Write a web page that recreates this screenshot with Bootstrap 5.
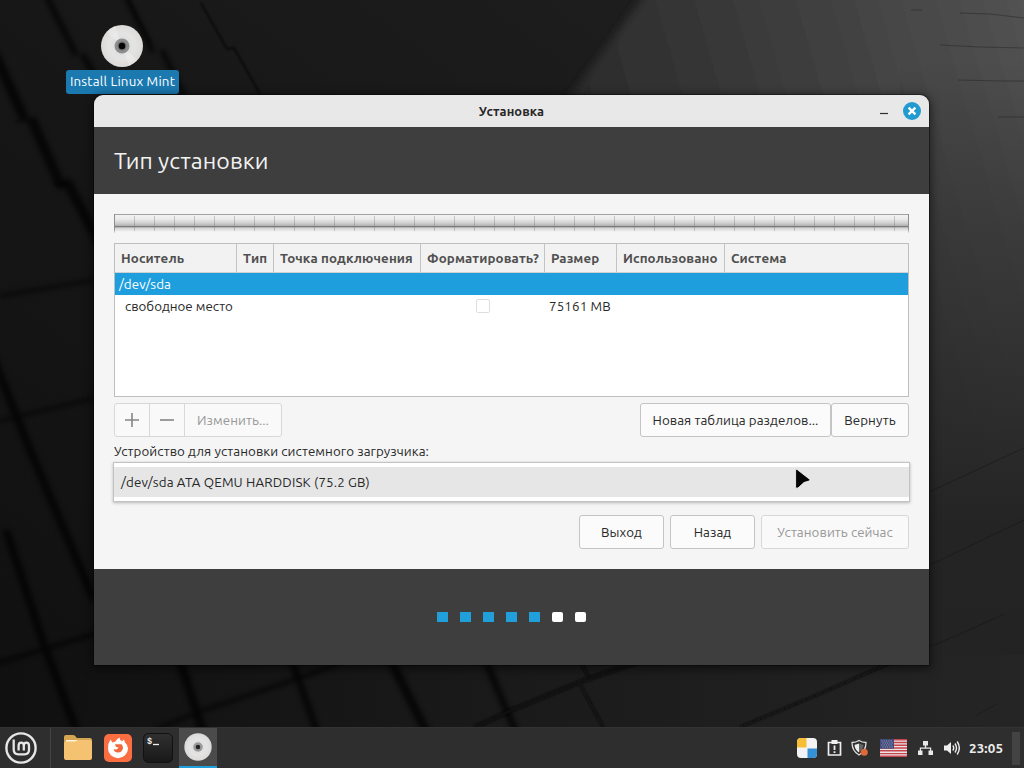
<!DOCTYPE html>
<html lang="ru">
<head>
  <meta charset="utf-8">
  <title>Установка</title>
  <link rel="stylesheet" href="https://cdn.jsdelivr.net/npm/bootstrap@5.3.0/dist/css/bootstrap.min.css">
  <style>
    body {
      width: 1024px;
      height: 768px;
      background: #151515;
      font-family: Ubuntu, "Noto Sans", "Open Sans", sans-serif;
      font-size: 13.33px;
      line-height: 20px;
      letter-spacing: .06px;
      color: #282828;
      cursor: default;
    }
    .latin { letter-spacing: .15px; }
    .wallpaper { left: 0; top: 0; }
    .desk-icon { left: 66px; top: 24px; width: 113px; }
    .desk-icon svg { margin-left: 34px; }
    .desk-label { background: #1b79b0; color: #fff; border-radius: 3px; height: 24px; line-height: 23px; margin-top: 2px; letter-spacing: .2px; white-space: nowrap; }

    /* installer window */
    .win { left: 94px; top: 95px; width: 835px; height: 570px; border-radius: 9px 9px 0 0; box-shadow: 0 2px 10px 2px rgba(0,0,0,.5), 0 0 0 1px rgba(0,0,0,.35); }
    .win-title { height: 32px; background: #e8e8e8; border-radius: 9px 9px 0 0; }
    .win-title b { font-size: 12.9px; }
    .win-buttons { right: 8px; top: 7px; gap: 14px; }
    .win-head { height: 67px; background: #3e3e3e; color: #f2f2f2; font-size: 23.15px; padding-bottom: 1px; }
    .win-body { height: 375px; background: #f5f5f5; padding: 20px 20px 0; }
    .win-foot { height: 96px; background: #3e3e3e; gap: 12px; }
    .win-foot i { width: 11px; height: 10px; background: #209fdb; }
    .win-foot i.todo { background: #fff; border-radius: 2px; }

    .disk-bar {
      height: 19px;
      border-left: 1px solid #8e8e8e;
      border-right: 1px solid #8e8e8e;
      border-image: linear-gradient(#8e8e8e 75%, transparent) 1;
      background:
        repeating-linear-gradient(90deg, transparent 0 19px, rgba(120,120,120,.36) 19px 20px) 0 2px / 100% 15px no-repeat,
        linear-gradient(#a2a2a2 0 1px, #f2f2f2 1px, #ebebeb 5px, #d0d0d0 9px, #b0b0b0 12px, #7c7c7c 12px 13px, #9a9a9a 13px, #d4d4d4 14px, #f5f5f5 18px);
    }

    .parts { height: 154px; margin-top: 10px; background: #fff; border: 1px solid #bebebe; }
    .parts table { table-layout: fixed; width: 793px; border-collapse: separate; border-spacing: 0; }
    .parts th { height: 29px; padding: 2px 0 0 6px; background: #f2f2f2; color: #505050; border-right: 1px solid #c3c3c3; border-bottom: 1px solid #d0d0d0; letter-spacing: .1px; white-space: nowrap; }
    .parts th:last-child { border-right: 0; }
    .parts td { height: 22px; padding: 2px 0 0 4px; line-height: 20px; white-space: nowrap; }
    .parts .picked td { background: #1f9ede; color: #fff; }
    .parts .child { padding-left: 10px; letter-spacing: 0; }
    .parts .check { padding-top: 0; }
    .tick { display: block; width: 14px; height: 14px; border: 1px solid #dedede; border-radius: 2px; background: #fff; margin-left: 51px; }
    .tools { margin-top: 6px; }
    .actions { margin-top: 13px; gap: 6px; }

    .gbtn { height: 34px; border: 1px solid #c4c4c4; border-radius: 3px; background: #fbfbfb; color: #282828; padding: 2px 0 0; line-height: 20px; letter-spacing: inherit; white-space: nowrap; }
    .gbtn:disabled { background: #f9f9f9; color: #979797; border-color: #d8d8d8; }
    .gbtn.edge { border-radius: 3px 0 0 3px; }
    .gbtn.mid { border-radius: 0; margin-left: -1px; }
    .gbtn.end { border-radius: 0 3px 3px 0; margin-left: -1px; }
    .w-sign { width: 36px; padding: 0; }
    .w-edit { width: 98px; }
    .w-table { width: 191px; }
    .w-undo { width: 78px; }
    .w-nav { width: 85px; }
    .w-install { width: 148px; }
    .boot-label { height: 20px; margin-top: 5px; letter-spacing: .06px; }
    .boot-menu { height: 40px; margin: 0 -1px; background: #fff; padding: 4px 0; border: 1px solid #c2c2c2; box-shadow: 0 1px 3px rgba(0,0,0,.25); }
    .boot-menu div { height: 30px; line-height: 31px; background: #e6e6e6; padding-left: 7px; }
    .pointer { left: 794px; top: 467px; }

    /* panel */
    .panel { left: 0; top: 727px; width: 1024px; height: 41px; background: #2e2e2e; border-top: 1px solid #333; }
    .panel-sep { width: 1px; background: #454545; margin: 0 12px; }
    .launchers { gap: 11px; }
    .task-on { width: 38px; height: 40px; background: #4b4b4b; border-bottom: 2px solid #209fdb; margin-left: 6px; }
    .clock { color: #ececec; width: 36px; margin: 0 7px 0 8px; padding-top: 1px; }
    .show-desk { width: 8px; height: 33px; background: #434343; margin-right: 4px; }
  </style>
</head>
<body class="position-relative overflow-hidden">

  <svg class="wallpaper position-absolute" width="1024" height="768" viewBox="0 0 1024 768">
    <defs>
      <linearGradient id="bg" x1="0" y1="1" x2="1" y2="0">
        <stop offset="0" stop-color="#101010"/><stop offset=".45" stop-color="#161616"/><stop offset="1" stop-color="#212121"/>
      </linearGradient>
      <linearGradient id="lit" gradientUnits="userSpaceOnUse" x1="570" y1="130" x2="1024" y2="0">
        <stop offset="0" stop-color="#2a2a2a"/><stop offset=".5" stop-color="#3d3d3d"/><stop offset="1" stop-color="#525252"/>
      </linearGradient>
      <linearGradient id="side" gradientUnits="userSpaceOnUse" x1="0" y1="60" x2="0" y2="727">
        <stop offset="0" stop-color="#212121" stop-opacity="0"/><stop offset=".35" stop-color="#292929" stop-opacity=".6"/><stop offset=".7" stop-color="#242424"/><stop offset="1" stop-color="#222"/>
      </linearGradient>
      <linearGradient id="low" x1="0" x2="1"><stop offset="0" stop-color="#101010"/><stop offset=".5" stop-color="#1a1a1a"/><stop offset="1" stop-color="#252525"/></linearGradient>
      <filter id="thin" filterUnits="userSpaceOnUse" x="0" y="0" width="1024" height="768"><feGaussianBlur stdDeviation=".8"/></filter>
      <filter id="wide" filterUnits="userSpaceOnUse" x="-20" y="-20" width="1064" height="808"><feGaussianBlur stdDeviation="2.600"/></filter>
      <filter id="edge" filterUnits="userSpaceOnUse" x="480" y="-60" width="640" height="760"><feGaussianBlur stdDeviation="4"/></filter>
      <radialGradient id="disc"><stop offset="0" stop-color="#d8d8d8"/><stop offset=".6" stop-color="#e4e4e4"/><stop offset="1" stop-color="#dcdad8"/></radialGradient>
    </defs>
    <rect width="1024" height="768" fill="url(#bg)"/>
    <path d="M678-50L560 110V640H1090V-50Z" fill="url(#lit)" filter="url(#edge)"/>
    <rect x="900" y="60" width="124" height="667" fill="url(#side)"/>
    <rect y="655" width="1024" height="75" fill="url(#low)"/>
    <g fill="none" stroke="#040404" filter="url(#wide)" opacity=".7">
      <path stroke-width="6" d="M46-5L76 55M82 54L100 84"/>
      <path stroke-width="5" d="M125-5L153 52M162 50L185 98"/>
      <path stroke-width="10" d="M-6 52L25 120M31 118L60 184L68 184L100 244"/>
      <path stroke-width="8" d="M-10 350L30 450L94 600M6 530L44 645L78 735"/>
      <path stroke-width="9" d="M178 655L204 735M388 655L428 735"/>
      <path stroke-width="7" d="M290 655L318 735M483 655L517 735"/>
      <path stroke-width="4" d="M-5 664L44 649L98 633M155 730L198 712L294 680L340 663"/>
      <path stroke-width="3" d="M0 421L94 398M0 296L94 280"/>
    </g>
    <g fill="none" stroke="#090909" filter="url(#thin)" opacity=".85">
      <path stroke-width="1.500" d="M201 3L227 49L234 48L260 94"/>
      <path stroke-width="2" d="M16 121H30M53 184H66M128-2L150 42" opacity=".4"/>
      <path stroke-width="2.500" d="M580 662L591 681M581 686L603 727"/>
      <path stroke-width="4" d="M475 727L512 710L590 678L645 660"/>
      <path stroke-width="2.200" d="M740 727L810 698L890 663"/>
    </g>
    <g fill="none" stroke="#151515" opacity=".5">
      <path d="M929 647L960 634L1004 614M975 716L997 704M929 492L1024 448M930 565L1024 520"/>
      <path d="M911 10H922M960 13L990 14L1024 18M940 45L980 47L1024 48M958 80L1000 81H1024M998 117H1024" opacity=".7"/>
    </g>
  </svg>

  <div class="desk-icon position-absolute text-center">
    <svg class="d-block" width="44" height="44" viewBox="0 0 44 44">
      <circle cx="22" cy="22" r="21" fill="url(#disc)"/>
      <path d="M22 22L7 8A21 21 0 0 1 15 2ZM22 22L37 36A21 21 0 0 1 29 42Z" fill="#fff" opacity=".25"/>
      <circle cx="22" cy="22" r="7.500" fill="#8e8e8e"/><circle cx="22" cy="22" r="4.500" fill="#6c6c6c"/><circle cx="22" cy="22" r="3.200" fill="#050505"/>
    </svg>
    <div class="desk-label">Install Linux Mint</div>
  </div>

  <div class="win position-absolute">
    <div class="win-title position-relative d-flex align-items-center justify-content-center">
      <b>Установка</b>
      <div class="win-buttons position-absolute d-flex">
        <svg width="9" height="18"><path d="M0 11.500H8" stroke="#303030" stroke-width="1.200"/></svg>
        <svg width="18" height="18" viewBox="0 0 18 18"><circle cx="9" cy="9" r="9" fill="#219bd0"/><path d="M5.600 5.600L12.400 12.400M12.400 5.600L5.600 12.400" stroke="#fff" stroke-width="2.300"/></svg>
      </div>
    </div>

    <div class="win-head d-flex align-items-center px-3"><span class="ms-1">Тип установки</span></div>

    <div class="win-body">
      <div class="disk-bar"></div>

      <div class="parts">
        <table>
          <colgroup><col style="width:122px"><col style="width:37px"><col style="width:147px"><col style="width:124px"><col style="width:72px"><col style="width:108px"><col></colgroup>
          <thead>
            <tr><th>Носитель</th><th>Тип</th><th>Точка подключения</th><th>Форматировать?</th><th>Размер</th><th>Использовано</th><th>Система</th></tr>
          </thead>
          <tbody>
            <tr class="picked"><td colspan="7">/dev/sda</td></tr>
            <tr><td class="child">свободное место</td><td></td><td></td><td class="check"><span class="tick"></span></td><td class="latin">75161 MB</td><td></td><td></td></tr>
          </tbody>
        </table>
      </div>

      <div class="tools d-flex justify-content-between">
        <div class="d-flex">
          <button class="gbtn edge w-sign d-flex align-items-center justify-content-center" disabled><svg width="16" height="16"><path d="M8 1V15M1 8H15" stroke="#858585" stroke-width="1.600"/></svg></button>
          <button class="gbtn mid w-sign d-flex align-items-center justify-content-center" disabled><svg width="16" height="16"><path d="M1 8H15" stroke="#858585" stroke-width="1.600"/></svg></button>
          <button class="gbtn end w-edit" disabled>Изменить...</button>
        </div>
        <div class="d-flex">
          <button class="gbtn w-table">Новая таблица разделов...</button>
          <button class="gbtn w-undo">Вернуть</button>
        </div>
      </div>

      <div class="boot-label">Устройство для установки системного загрузчика:</div>
      <div class="boot-menu"><div class="latin">/dev/sda ATA QEMU HARDDISK (75.2 GB)</div></div>

      <div class="actions d-flex justify-content-end">
        <button class="gbtn w-nav">Выход</button>
        <button class="gbtn w-nav">Назад</button>
        <button class="gbtn w-install" disabled>Установить сейчас</button>
      </div>
    </div>

    <div class="win-foot d-flex align-items-center justify-content-center">
      <i></i><i></i><i></i><i></i><i></i><i class="todo"></i><i class="todo"></i>
    </div>
  </div>

  <div class="panel position-absolute d-flex justify-content-between">
    <div class="d-flex align-items-center">
      <svg class="ms-1" width="34" height="34" viewBox="0 0 34 34" fill="none" stroke="#e6e6e6">
        <circle cx="17" cy="17" r="14.600" stroke-width="2.400"/>
        <path d="M9.700 8.500V18.500Q9.700 23.300 14.500 23.300H20.500Q25 23.300 25 19V14.800Q25 11.600 22.400 11.600T19.800 14.800V19.500M19.800 14.800Q19.800 11.600 17.200 11.600T14.600 14.800V19.500" stroke-width="2.300"/>
      </svg>
      <div class="panel-sep align-self-stretch"></div>
      <div class="launchers d-flex align-items-center">
        <svg width="30" height="30" viewBox="0 0 30 30">
          <path d="M1 4Q1 2 3 2H10Q12 2 13 4L14 5H27Q29 5 29 7V12H1Z" fill="#d6a552"/>
          <path d="M3 7H27V10H3Z" fill="#fff4dc"/>
          <path d="M1 10Q1 8.500 3 8.500H12L15 7H27Q29 7 29 9V25Q29 27 27 27H3Q1 27 1 25Z" fill="#f4c271"/>
        </svg>
        <svg width="28" height="28" viewBox="0 0 28 28">
          <rect width="28" height="28" rx="5" fill="#fa6e42"/>
          <path d="M6.500 5.500L8.500 8.500L11.500 7.600Q12.500 4.800 15.500 3.500Q15.600 6 18 7.300L20 5.500L21 8.500Q24 11 24 14.500A10 9.700 0 0 1 4 14.500Q4 9 6.500 5.500Z" fill="#fff"/>
          <path d="M11 10.200H17.500Q19.300 12 19 14.300Q18 18.500 14 18.500Q10.500 18.500 9.600 15.200L12.500 15.600L14.800 13.600L12 13Z" fill="#f2683d"/>
        </svg>
        <svg width="30" height="30" viewBox="0 0 30 30">
          <defs><linearGradient id="term" x2="0" y2="1"><stop offset="0" stop-color="#303030"/><stop offset="1" stop-color="#181818"/></linearGradient></defs>
          <rect x=".5" y=".5" width="29" height="29" rx="5" fill="url(#term)" stroke="#111"/>
          <text x="4" y="10.500" font-family="Liberation Mono" font-weight="bold" font-size="8.500" fill="#eee">$</text>
          <path d="M10 11.500H16" stroke="#eee" stroke-width="1.300"/>
        </svg>
      </div>
      <div class="task-on d-flex align-items-center justify-content-center">
        <svg width="28" height="28" viewBox="0 0 44 44">
          <circle cx="22" cy="22" r="21.500" fill="url(#disc)"/>
          <circle cx="22" cy="22" r="7.500" fill="#999"/><circle cx="22" cy="22" r="3.500" fill="#222"/>
        </svg>
      </div>
    </div>

    <div class="d-flex align-items-center">
      <svg width="22" height="22" viewBox="0 0 22 22">
        <rect x="1" y="1" width="20" height="20" rx="4" fill="#f3f3f3"/>
        <path d="M1 10.500V5Q1 1 5 1H10.500V10.500Z" fill="#f6bd35"/><path d="M11.500 11.500H21V17Q21 21 17 21H11.500Z" fill="#3590d4"/>
      </svg>
      <svg style="margin-left:9px" width="15" height="18" viewBox="0 0 15 18"><path d="M1.500 3.500H13.500V16H1.500Z" fill="none" stroke="#eee" stroke-width="1.700"/><path d="M4.500 1H10.500V5H4.500ZM6.600 6.500H8.400V11H6.600ZM6.600 12.200H8.400V14H6.600Z" fill="#eee"/></svg>
      <svg style="margin-left:9px" width="18" height="18" viewBox="0 0 18 18"><path d="M8 1.500Q11 3.500 15 3.500Q15 12 8 16Q1 12 1 3.500Q5 3.500 8 1.500Z" fill="none" stroke="#ddd" stroke-width="1.300"/><path d="M8 4.500Q10 5.600 12.500 5.800Q12.200 11 8 13.500Z" fill="#666"/><path d="M8 4.500Q6 5.600 3.500 5.800Q3.700 11 8 13.500Z" fill="#eee"/><circle cx="13.300" cy="13.300" r="3.500" fill="#df6938"/></svg>
      <svg style="margin-left:11px" width="27" height="18" viewBox="0 0 27 18">
        <rect width="27" height="18" fill="#e9e3e3"/>
        <path d="M0 .7H27M0 3.500H27M0 6.300H27M0 9H27M0 11.800H27M0 14.600H27M0 17.300H27" stroke="#c7434e" stroke-width="1.400"/>
        <rect width="14" height="9.700" fill="#434c7c"/>
        <path d="M1.500 2H13M2.500 4H13M1.500 6H13M2.500 8H13" stroke="#b9bdd2" stroke-width=".8" stroke-dasharray="1 1.300"/>
      </svg>
      <svg style="margin-left:11px" width="15" height="16" viewBox="0 0 15 16" fill="#e8e8e8"><path d="M5 1H10V5.500H8.200V7.500H13.200V10.500H15V15H10.500V10.500H12V8.800H3V10.500H4.500V15H0V10.500H1.800V7.500H6.800V5.500H5Z"/></svg>
      <svg style="margin-left:11px" width="17" height="16" viewBox="0 0 17 16"><path d="M0 5.500H3L7 2V14L3 10.500H0Z" fill="#eee"/><path d="M8.800 5.500Q10.600 8 8.800 10.500M11 3.500Q14 8 11 12.500M13.200 1.500Q17.500 8 13.200 14.500" fill="none" stroke="#eee" stroke-width="1.400"/></svg>
      <b class="clock latin">23:05</b>
      <div class="show-desk"></div>
    </div>
  </div>

  <svg class="pointer position-absolute" width="18" height="24" viewBox="0 0 18 24"><path d="M1.600 3Q2 1.800 3.200 2.600L16 12.500Q16.500 13.600 15 14L10 15.500L4 21Q1.600 22 1.600 19.800Z" fill="#050505" stroke="#fff" stroke-width=".8"/></svg>

  <script src="https://cdn.jsdelivr.net/npm/bootstrap@5.3.0/dist/js/bootstrap.bundle.min.js"></script>
</body>
</html>
